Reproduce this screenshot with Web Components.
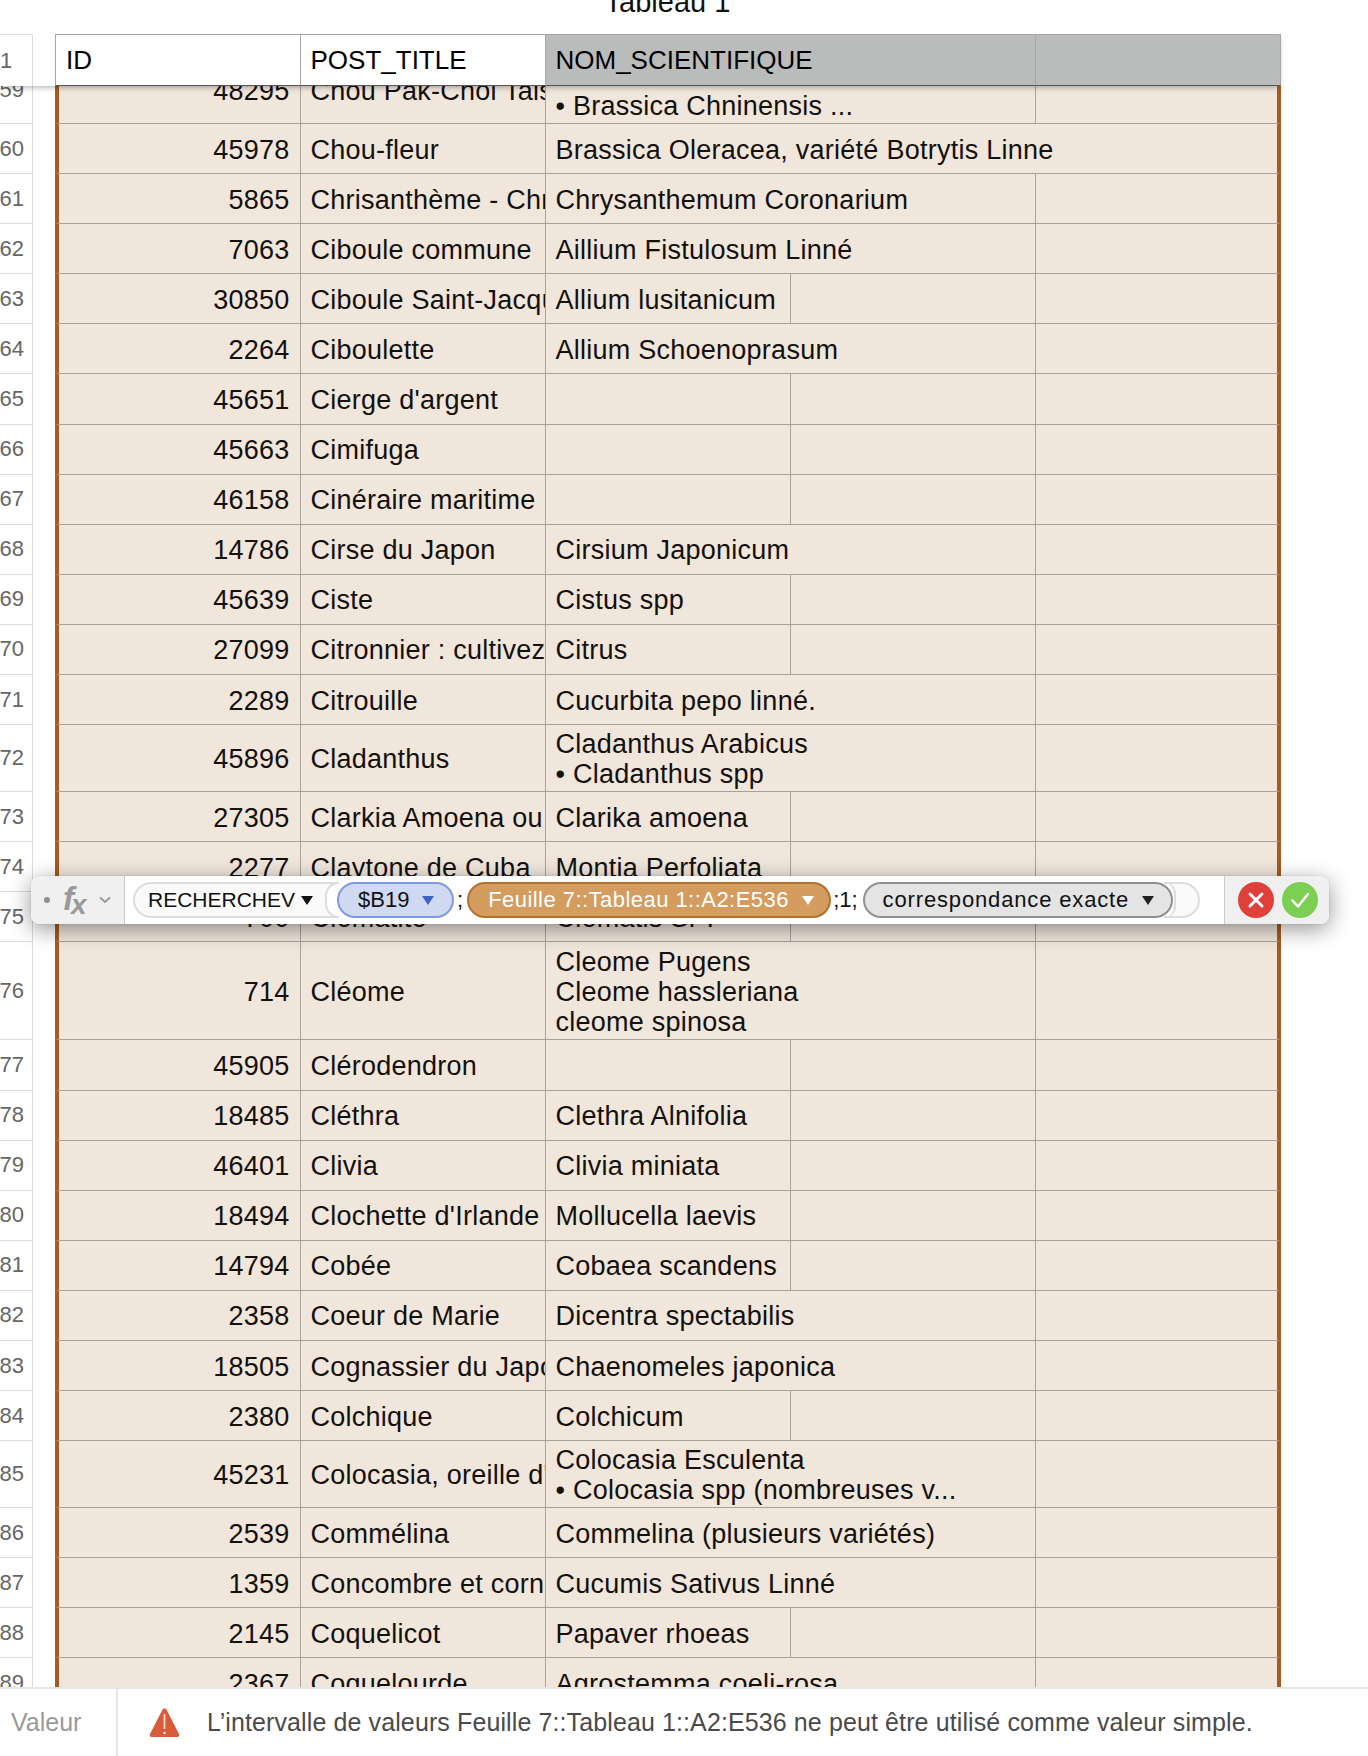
<!DOCTYPE html>
<html lang="fr">
<head>
<meta charset="utf-8">
<title>Tableau 1</title>
<style>
	html, body { margin: 0; padding: 0; background: #fff; }
	body { font-family: "Liberation Sans", Arial, sans-serif; }
</style>
</head>
<body>
<sheet-app></sheet-app>
<script>
const ROWS = [
	[59, "48295", "Chou Pak-Choi Taisai", "Brassica Chinensis\n• Brassica Chninensis ...", 2],
	[60, "45978", "Chou-fleur", "Brassica Oleracea, variété Botrytis Linne", 3],
	[61, "5865", "Chrisanthème - Chrysanthème", "Chrysanthemum Coronarium", 2],
	[62, "7063", "Ciboule commune", "Aillium Fistulosum Linné", 2],
	[63, "30850", "Ciboule Saint-Jacques", "Allium lusitanicum", 1],
	[64, "2264", "Ciboulette", "Allium Schoenoprasum", 2],
	[65, "45651", "Cierge d'argent", "", 1],
	[66, "45663", "Cimifuga", "", 1],
	[67, "46158", "Cinéraire maritime", "", 1],
	[68, "14786", "Cirse du Japon", "Cirsium Japonicum", 2],
	[69, "45639", "Ciste", "Cistus spp", 1],
	[70, "27099", "Citronnier : cultivez le citron", "Citrus", 1],
	[71, "2289", "Citrouille", "Cucurbita pepo linné.", 2],
	[72, "45896", "Cladanthus", "Cladanthus Arabicus\n• Cladanthus spp", 2],
	[73, "27305", "Clarkia Amoena ou Godetia", "Clarika amoena", 1],
	[74, "2277", "Claytone de Cuba", "Montia Perfoliata", 1],
	[75, "700", "Clématite", "Clematis SPP", 1],
	[76, "714", "Cléome", "Cleome Pugens\nCleome hassleriana\ncleome spinosa", 2],
	[77, "45905", "Clérodendron", "", 1],
	[78, "18485", "Cléthra", "Clethra Alnifolia", 1],
	[79, "46401", "Clivia", "Clivia miniata", 1],
	[80, "18494", "Clochette d'Irlande", "Mollucella laevis", 1],
	[81, "14794", "Cobée", "Cobaea scandens", 1],
	[82, "2358", "Coeur de Marie", "Dicentra spectabilis", 2],
	[83, "18505", "Cognassier du Japon", "Chaenomeles japonica", 2],
	[84, "2380", "Colchique", "Colchicum", 1],
	[85, "45231", "Colocasia, oreille d'éléphant", "Colocasia Esculenta\n• Colocasia spp (nombreuses v...", 2],
	[86, "2539", "Commélina", "Commelina (plusieurs variétés)", 2],
	[87, "1359", "Concombre et cornichon", "Cucumis Sativus Linné", 2],
	[88, "2145", "Coquelicot", "Papaver rhoeas", 1],
	[89, "2367", "Coquelourde", "Agrostemma coeli-rosa", 2]
];

class SheetApp extends HTMLElement {
	connectedCallback() {
		const shadow = this.attachShadow({ mode: "open" });
		shadow.innerHTML = `
			<style>
				:host { display: flex; flex-direction: column; position: relative; width: 1368px; height: 1756px; overflow: hidden; font-family: "Liberation Sans", Arial, sans-serif; }
				.title { margin: -13px 88px 0 55px; height: 47px; line-height: 30px; font-size: 29px; text-align: center; color: #111; flex: none; }
				.view { flex: 1; min-height: 0; overflow: hidden; }
				.rows { margin-top: -29px; }
				formula-bar { position: absolute; left: 31px; top: 876px; }
			</style>
			<div class="title">Tableau 1</div>
			<sheet-header></sheet-header>
			<div class="view"><div class="rows"></div></div>
			<status-bar>L’intervalle de valeurs Feuille 7::Tableau 1::A2:E536 ne peut être utilisé comme valeur simple.</status-bar>
			<formula-bar></formula-bar>
		`;
		const rows = shadow.querySelector(".rows");
		for (const [num, id, title, sci, span] of ROWS) {
			const row = document.createElement("sheet-row");
			row.setAttribute("num", num);
			row.setAttribute("span", span);
			row.dataset.id = id;
			row.dataset.title = title;
			row.dataset.sci = sci;
			rows.appendChild(row);
		}
	}
}

class SheetHeader extends HTMLElement {
	connectedCallback() {
		const shadow = this.attachShadow({ mode: "open" });
		shadow.innerHTML = `
			<style>
				:host { display: grid; grid-template-columns: 33px 22px 245.5px 245px 245px 245px 245.5px; width: 1281px; height: 52px; flex: none; position: relative; z-index: 2; box-sizing: border-box; font-size: 26px; line-height: 30px; color: #000; box-shadow: 0 3px 6px -2px rgba(0,0,0,.35); }
				div { box-sizing: border-box; display: flex; align-items: center; padding: 0 0 0 10px; white-space: nowrap; }
				.gutter { border-top: 1px solid #dcdcdc; border-right: 1px solid #dcdcdc; padding: 1px 0 0 0; font-size: 22px; color: #666; }
				.gap { padding: 0; background: #fff; }
				.c { border-top: 1px solid #a6a6a6; border-bottom: 1px solid #555; border-right: 1px solid #a6a6a6; }
				.id { border-left: 1px solid #a6a6a6; }
				.dark { background: #babcbb; }
			</style>
			<div class="gutter">1</div>
			<div class="gap"></div>
			<div class="c id">ID</div>
			<div class="c">POST_TITLE</div>
			<div class="c dark" style="grid-column: span 2">NOM_SCIENTIFIQUE</div>
			<div class="c dark"></div>
		`;
	}
}

class SheetCell extends HTMLElement {
	connectedCallback() {
		const shadow = this.attachShadow({ mode: "open" });
		shadow.innerHTML = `
			<style>
				:host { display: flex; align-items: center; box-sizing: border-box; min-width: 0; overflow: hidden; padding: 2px 0 0 10px; border-right: 1px solid #a9a199; border-bottom: 1px solid #a9a199; background: #f0e6dc; color: #14100c; white-space: pre; font-size: 27px; line-height: 30px; letter-spacing: .25px; }
				:host([num]) { justify-content: flex-end; padding: 2px 10px 0 0; border-left: 4px solid #a85a1c; }
				:host([last]) { border-right: 4px solid #a85a1c; }
			</style>
			<span><slot></slot></span>
		`;
	}
}

class SheetRow extends HTMLElement {
	connectedCallback() {
		const span = Number(this.getAttribute("span"));
		const lines = this.dataset.sci.split("\n").length;
		const height = { 1: 50.1, 2: 67, 3: 98 }[lines];
		const shadow = this.attachShadow({ mode: "open" });
		shadow.innerHTML = `
			<style>
				:host { display: grid; grid-template-columns: 33px 22px 245.5px 245px 245px 245px 245.5px; height: ${height}px; }
				.gutter { box-sizing: border-box; display: flex; align-items: center; justify-content: flex-end; padding-right: 8px; border-right: 1px solid #dcdcdc; border-bottom: 1px solid #dcdcdc; font-size: 22px; color: #666; }
				.sci { grid-column: span ${span}; }
			</style>
			<div class="gutter">${this.getAttribute("num")}</div>
			<div></div>
			<sheet-cell num></sheet-cell>
			<sheet-cell></sheet-cell>
			<sheet-cell class="sci"></sheet-cell>
			${span === 1 ? "<sheet-cell></sheet-cell>" : ""}
			${span === 3 ? "" : "<sheet-cell last></sheet-cell>"}
		`;
		const cells = shadow.querySelectorAll("sheet-cell");
		cells[0].textContent = this.dataset.id;
		cells[1].textContent = this.dataset.title;
		cells[2].textContent = this.dataset.sci;
		if (span === 3) cells[2].setAttribute("last", "");
	}
}

class FormulaToken extends HTMLElement {
	connectedCallback() {
		const shadow = this.attachShadow({ mode: "open" });
		shadow.innerHTML = `
			<style>
				:host { display: inline-flex; align-items: center; box-sizing: border-box; height: 36px; border-radius: 18px; border: 2px solid #ddd; background: #fafafa; color: #111; font-size: 22px; white-space: nowrap; flex: none; position: relative; }
				:host([kind=func]) { width: 204px; padding-left: 13px; border-right: 0; border-radius: 18px 0 0 18px; font-size: 21px; }
				:host([kind=ref]) { width: 117px; padding-left: 19px; background: #d0d9f2; border-color: #7f9be0; z-index: 1; }
				:host([kind=range]) { width: 364px; padding-left: 19px; background: #d49c5e; border-color: #b2722f; color: #fff; letter-spacing: .46px; }
				:host([kind=opt]) { width: 310px; padding-left: 18px; background: #e4e4e4; border-color: #909090; letter-spacing: .85px; z-index: 1; }
				svg { margin-left: 6px; flex: none; }
				:host([kind=ref]) svg { margin-left: 13px; }
				:host([kind=range]) svg { margin-left: 13px; }
				:host([kind=opt]) svg { margin-left: 13px; }
			</style>
			<slot></slot>
			<svg width="12" height="9" viewBox="0 0 12 9"><path d="M0 0h12L6 9z" fill="var(--arrow, #111)"/></svg>
		`;
	}
}

class FormulaBar extends HTMLElement {
	connectedCallback() {
		const shadow = this.attachShadow({ mode: "open" });
		shadow.innerHTML = `
			<style>
				:host { display: flex; width: 1298px; height: 48px; border-radius: 8px; background: #fff; box-shadow: 0 0 1px rgba(0,0,0,.4), 0 5px 22px rgba(0,0,0,.42); z-index: 3; overflow: visible; font-family: "Liberation Sans", Arial, sans-serif; }
				.fx { box-sizing: border-box; width: 94px; flex: none; display: flex; align-items: center; background: #f0f0f0; border-right: 1px solid #c9c9c9; border-radius: 8px 0 0 8px; color: #999; }
				.dot { width: 6px; height: 6px; margin-left: 13px; border-radius: 50%; background: #8e8e8e; flex: none; }
				.sym { margin-left: 13px; width: 35px; font-weight: bold; font-style: italic; font-size: 33px; line-height: 30px; white-space: nowrap; flex: none; }
				.sym span { font-size: 28px; margin-left: -3px; position: relative; top: 4px; }
				.chev { margin-left: 1px; flex: none; }
				.mid { box-sizing: border-box; flex: 1; display: flex; align-items: center; padding-left: 8px; }
				.open { width: 14px; height: 36px; margin: 0 -2px 0 -12px; box-sizing: border-box; border: 2px solid #ddd; border-right: 0; border-radius: 18px 0 0 18px; background: #fff; flex: none; position: relative; }
				.sep { font-size: 22px; color: #111; flex: none; }
				.close { box-sizing: border-box; width: 36px; height: 36px; margin-left: -9px; border: 2px solid #ddd; border-left: 0; border-radius: 0 18px 18px 0; background: #fafafa; flex: none; position: relative; }
				.close::before { content: ""; position: absolute; left: 0; top: -2px; width: 12px; height: 36px; box-sizing: border-box; border-right: 2px solid #ddd; border-radius: 0 18px 18px 0; }
				.btns { box-sizing: border-box; width: 105px; flex: none; display: flex; align-items: center; gap: 8px; padding-left: 13px; background: #f0f0f0; border-left: 1px solid #c9c9c9; border-radius: 0 8px 8px 0; }
				.btns svg { flex: none; }
				.ref { --arrow: #3c62c8; }
				.range { --arrow: #fff; }
				.opt { --arrow: #222; }
			</style>
			<div class="fx">
				<span class="dot"></span>
				<span class="sym">f<span>x</span></span>
				<svg class="chev" width="12" height="8" viewBox="0 0 12 8"><path d="M1 1.500l5 4.500 5-4.500" fill="none" stroke="#999" stroke-width="2"/></svg>
			</div>
			<div class="mid">
				<formula-token kind="func">RECHERCHEV</formula-token>
				<span class="open"></span>
				<formula-token kind="ref" class="ref">$B19</formula-token>
				<span class="sep" style="margin: 0 4px 0 3px">;</span>
				<formula-token kind="range" class="range">Feuille 7::Tableau 1::A2:E536</formula-token>
				<span class="sep" style="margin: 0 5px 0 2px">;1;</span>
				<formula-token kind="opt" class="opt">correspondance exacte</formula-token>
				<span class="close"></span>
			</div>
			<div class="btns">
				<svg width="36" height="36" viewBox="0 0 36 36"><circle cx="18" cy="18" r="18" fill="#e0403a"/><path d="M12 12l12 12M24 12L12 24" stroke="#fff" stroke-width="3" stroke-linecap="round"/></svg>
				<svg width="36" height="36" viewBox="0 0 36 36"><circle cx="18" cy="18" r="18" fill="#7ccf52"/><path d="M10.500 18.500l5.500 6 10-12.500" fill="none" stroke="#fff" stroke-width="2.400" stroke-linecap="round" stroke-linejoin="round"/></svg>
			</div>
		`;
	}
}

class StatusBar extends HTMLElement {
	connectedCallback() {
		const shadow = this.attachShadow({ mode: "open" });
		shadow.innerHTML = `
			<style>
				:host { display: flex; flex: none; box-sizing: border-box; height: 69px; border-top: 2px solid #e4e6e9; background: #fff; position: relative; z-index: 2; font-size: 25px; }
				.label { box-sizing: border-box; width: 118px; padding-left: 11px; display: flex; align-items: center; color: #9a9a9a; border-right: 2px solid #e6e6e6; flex: none; }
				.msg { display: flex; align-items: center; gap: 27px; padding-left: 31px; color: #4a4a4a; letter-spacing: .11px; white-space: nowrap; }
				svg { flex: none; }
			</style>
			<div class="label">Valeur</div>
			<div class="msg">
				<svg width="31" height="31" viewBox="0 0 31 31"><path d="M15.500 1.500c1 0 1.700.5 2.200 1.400l12.300 24c.7 1.500 0 3-1.700 3H2.700c-1.700 0-2.400-1.500-1.700-3l12.300-24c.5-.9 1.200-1.400 2.200-1.400z" fill="#d95b3a"/><path d="M15.500 7v15" stroke="#f6d9cf" stroke-width="1.800"/><circle cx="15.500" cy="26" r="1.200" fill="#fff"/></svg>
				<span><slot></slot></span>
			</div>
		`;
	}
}

customElements.define("sheet-cell", SheetCell);
customElements.define("sheet-row", SheetRow);
customElements.define("sheet-header", SheetHeader);
customElements.define("formula-token", FormulaToken);
customElements.define("formula-bar", FormulaBar);
customElements.define("status-bar", StatusBar);
customElements.define("sheet-app", SheetApp);
</script>
</body>
</html>
